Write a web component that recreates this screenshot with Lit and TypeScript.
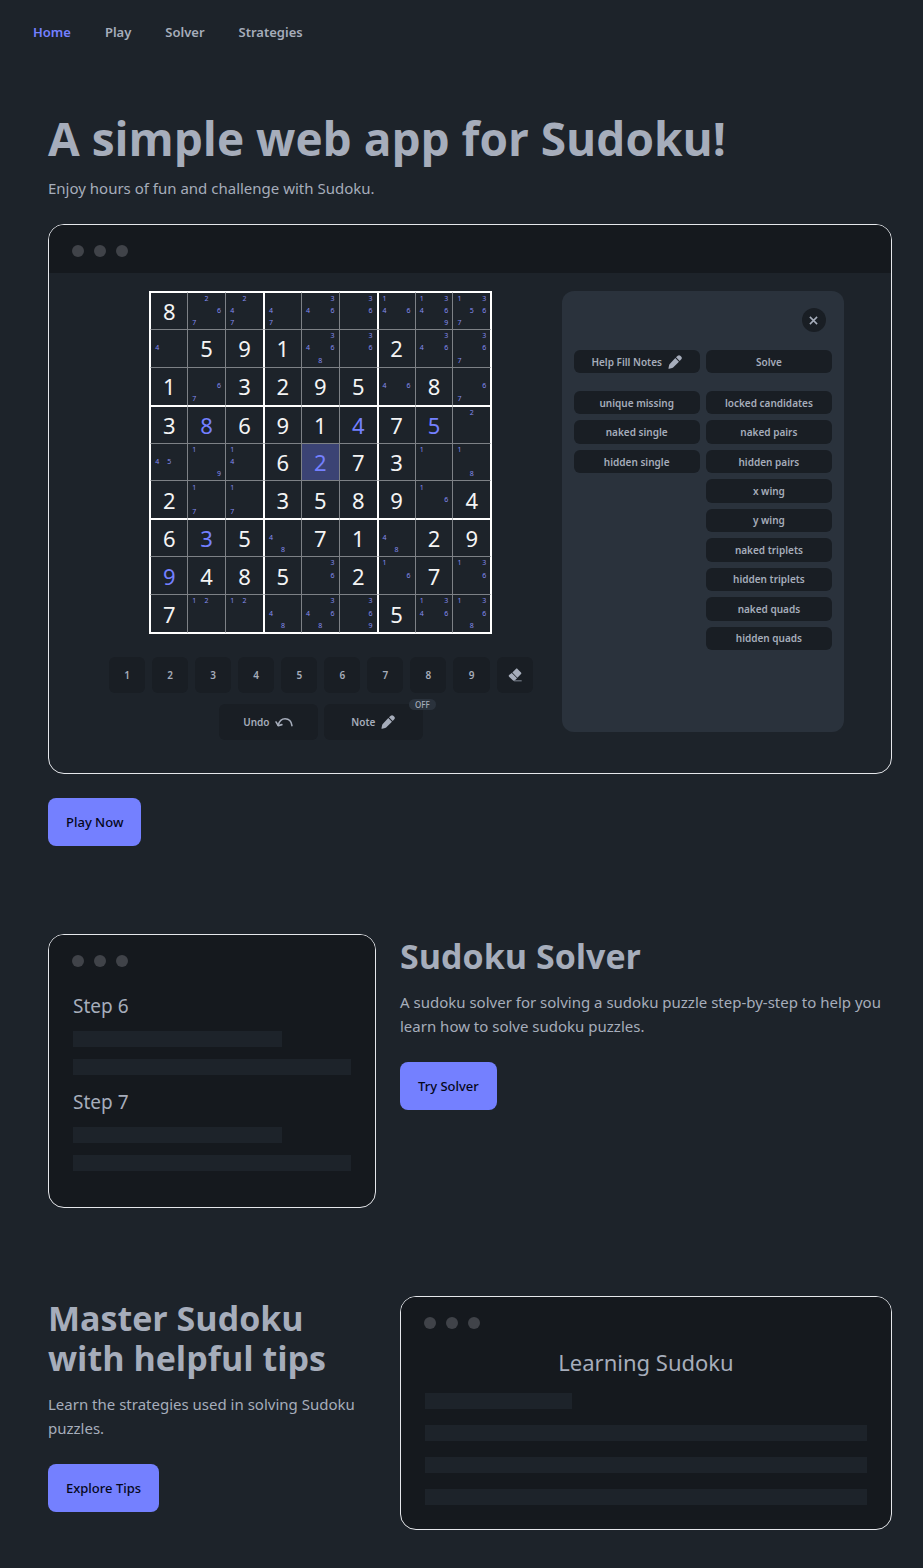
import { LitElement, html, css, svg, nothing } from "lit";
import { customElement, property } from "lit/decorators.js";
import { classMap } from "lit/directives/class-map.js";

const pencilIcon = html`<svg class="icon" viewBox="0 0 24 24" aria-hidden="true">
  ${svg`<path fill="currentColor" d="M12.500 5.200l6.300 6.300L8.800 21.300c-.5.5-1 .8-1.700.9l-5.300 1.300c-.6.1-1.200-.4-1-1l1.200-5.400c.2-.7.500-1.200 1-1.700zM13.700 4l3-2.800c1.200-1.200 3.200-1.200 4.400 0l1.700 1.700c1.200 1.200 1.200 3.200 0 4.400l-2.800 3z"/>`}
</svg>`;

const undoIcon = html`<svg class="icon undo" viewBox="0 0 34 20" aria-hidden="true">
  ${svg`<g fill="none" stroke="currentColor" stroke-width="3" stroke-linecap="round" stroke-linejoin="round">
    <path d="M32 16C31 8 26 3 19 3C12 3 8 8 6 15"/>
    <path d="M2 9L6 16L13 14"/>
  </g>`}
</svg>`;

const eraserIcon = html`<svg class="icon" viewBox="0 0 24 24" aria-hidden="true">
  ${svg`<g fill="currentColor">
    <path d="M13.500 1.500c.8-.8 2-.8 2.800 0l6 6c.8.8.8 2 0 2.800l-6.200 6.200L7.500 7.800z"/>
    <path d="M6.500 8.700l9 9-4 3.600c-.8.800-2 .800-2.800 0L1.800 14.800c-.8-.8-.8-2 0-2.800z"/>
    <path opacity=".5" d="M12 20.500h11.500v2.500H10z"/>
  </g>`}
</svg>`;

const closeIcon = html`<svg class="cross" viewBox="0 0 10 10" aria-hidden="true">
  ${svg`<path d="M1 1L9 9M9 1L1 9" fill="none" stroke="currentColor" stroke-width="1.700"/>`}
</svg>`;

/* "8" is a given digit, "*8" an entered one, "!2" the selected one, "n267" pencil notes. */
const PUZZLE: string[][] = [
  ["8", "n267", "n247", "n47", "n346", "n36", "n146", "n13469", "n13567"],
  ["n4", "5", "9", "1", "n3468", "n36", "2", "n346", "n367"],
  ["1", "n67", "3", "2", "9", "5", "n46", "8", "n67"],
  ["3", "*8", "6", "9", "1", "*4", "7", "*5", "n2"],
  ["n45", "n19", "n14", "6", "!2", "7", "3", "n1", "n18"],
  ["2", "n17", "n17", "3", "5", "8", "9", "n16", "4"],
  ["6", "*3", "5", "n48", "7", "1", "n48", "2", "9"],
  ["*9", "4", "8", "5", "n36", "2", "n16", "7", "n136"],
  ["7", "n12", "n12", "n48", "n3468", "n369", "5", "n1346", "n1368"],
];

const DIGITS = ["1", "2", "3", "4", "5", "6", "7", "8", "9"];
const BASIC = ["unique missing", "naked single", "hidden single"];
const ADVANCED = [
  "locked candidates",
  "naked pairs",
  "hidden pairs",
  "x wing",
  "y wing",
  "naked triplets",
  "hidden triplets",
  "naked quads",
  "hidden quads",
];

@customElement("mock-window")
class MockWindow extends LitElement {
  @property({ type: Boolean, reflect: true }) dark = false;

  static styles = css`
    :host {
      display: block;
      box-sizing: border-box;
      overflow: hidden;
      border: 1px solid #e5e7eb;
      border-radius: 16px;
    }
    :host([dark]) {
      background: #15191e;
    }
    .bar {
      display: flex;
      gap: 10px;
      box-sizing: border-box;
      height: 48px;
      padding: 20px 23px 0;
      background: #15191e;
    }
    .dot {
      width: 12px;
      height: 12px;
      border-radius: 50%;
      background: #404349;
    }
  `;

  render() {
    return html`<div class="bar">
        <span class="dot"></span><span class="dot"></span><span class="dot"></span>
      </div>
      <slot></slot>`;
  }
}

@customElement("sudoku-board")
class SudokuBoard extends LitElement {
  static styles = css`
    :host {
      display: grid;
      grid-template: repeat(9, minmax(0, 1fr)) / repeat(9, minmax(0, 1fr));
      box-sizing: border-box;
      width: 343px;
      aspect-ratio: 1;
      border: 1px solid #ffffff;
      color: #f4f4f4;
    }
    .cell {
      display: grid;
      place-items: center;
      border: 0 solid #ffffff;
      border-right: 1px solid #7d8186;
      border-bottom: 1px solid #7d8186;
      font-size: 22px;
      line-height: 24px;
    }
    .left {
      border-left: 1px solid #ffffff;
    }
    .right {
      border-right-color: #ffffff;
    }
    .top {
      border-top: 1px solid #ffffff;
    }
    .bottom {
      border-bottom-color: #ffffff;
    }
    .entered {
      color: #7480ff;
    }
    .selected {
      background: #3b4374;
    }
    .notes {
      grid-template: repeat(3, minmax(0, 1fr)) / repeat(3, minmax(0, 1fr));
      color: #858df0;
      font-size: 7px;
      line-height: 8px;
    }
  `;

  private cell(value: string, row: number, col: number) {
    const notes = value[0] === "n";
    const selected = value[0] === "!";
    const classes = classMap({
      cell: true,
      notes,
      selected,
      entered: selected || value[0] === "*",
      left: col % 3 === 0,
      right: col % 3 === 2,
      top: row % 3 === 0,
      bottom: row % 3 === 2,
    });
    return html`<div class=${classes}>
      ${notes
        ? DIGITS.map((d) => html`<span>${value.includes(d) ? d : nothing}</span>`)
        : value.slice(-1)}
    </div>`;
  }

  render() {
    return PUZZLE.map((line, row) => line.map((value, col) => this.cell(value, row, col)));
  }
}

@customElement("game-preview")
class GamePreview extends LitElement {
  static styles = css`
    :host {
      display: grid;
      grid-template-columns: minmax(0, 3fr) minmax(0, 2fr);
      gap: 29px;
      align-items: start;
      padding: 18px 47px 33px 60px;
    }
    button {
      display: flex;
      align-items: center;
      justify-content: center;
      gap: 6px;
      margin: 0;
      padding: 0;
      border: 0;
      border-radius: 6px;
      background: #191e24;
      color: #a6adbb;
      font-family: inherit;
      font-size: 10px;
      font-weight: 600;
      line-height: 14px;
    }
    .icon {
      width: 14px;
      height: 14px;
    }
    .undo {
      width: 18px;
      height: 11px;
    }
    .play {
      display: flex;
      flex-direction: column;
      align-items: center;
    }
    .keys {
      display: grid;
      grid-template-columns: repeat(10, minmax(0, 1fr));
      gap: 7px;
      align-self: stretch;
      margin-top: 23px;
    }
    .keys button,
    .actions button {
      height: 36px;
    }
    .actions {
      display: grid;
      grid-template-columns: 99px 99px;
      gap: 6px;
      margin-top: 11px;
    }
    .toggle {
      position: relative;
    }
    .badge {
      position: absolute;
      top: -5px;
      right: -13px;
      padding: 0 6px;
      border-radius: 6px;
      background: #2a323c;
      font-size: 8px;
      font-weight: 500;
      line-height: 11px;
    }
    .panel {
      display: flex;
      flex-direction: column;
      gap: 18px;
      box-sizing: border-box;
      min-height: 441px;
      padding: 17px 12px;
      border-radius: 12px;
      background: #2a323c;
    }
    .panel .close {
      align-self: flex-end;
      width: 24px;
      height: 24px;
      margin-right: 6px;
      border-radius: 50%;
    }
    .cross {
      width: 9px;
      height: 9px;
    }
    .pair {
      display: grid;
      grid-template-columns: repeat(2, minmax(0, 1fr));
      gap: 6px;
    }
    .pair > button {
      height: 23px;
    }
    .stack {
      display: grid;
      grid-template-rows: repeat(9, minmax(0, 1fr));
      gap: 6px;
      height: 259px;
    }
  `;

  render() {
    return html`
      <div class="play">
        <sudoku-board></sudoku-board>
        <div class="keys">
          ${DIGITS.map((d) => html`<button type="button">${d}</button>`)}
          <button type="button" aria-label="Erase">${eraserIcon}</button>
        </div>
        <div class="actions">
          <button type="button">Undo ${undoIcon}</button>
          <button type="button" class="toggle">Note ${pencilIcon}<span class="badge">OFF</span></button>
        </div>
      </div>
      <div class="panel">
        <button type="button" class="close" aria-label="Close">${closeIcon}</button>
        <div class="pair">
          <button type="button">Help Fill Notes ${pencilIcon}</button>
          <button type="button">Solve</button>
        </div>
        <div class="pair">
          <div class="stack">${BASIC.map((t) => html`<button type="button">${t}</button>`)}</div>
          <div class="stack">${ADVANCED.map((t) => html`<button type="button">${t}</button>`)}</div>
        </div>
      </div>
    `;
  }
}

@customElement("app-root")
class AppRoot extends LitElement {
  static styles = css`
    :host {
      display: block;
      box-sizing: border-box;
      min-height: 100vh;
      background: #1d232a;
      color: #a6adbb;
      font-family: "Segoe UI", "Noto Sans", "Open Sans", sans-serif;
      font-size: 15px;
      line-height: 24px;
    }
    nav {
      display: flex;
      align-items: center;
      gap: 34px;
      height: 64px;
      padding: 0 33px;
      font-size: 13px;
      font-weight: 600;
    }
    a {
      color: inherit;
      text-decoration: none;
    }
    .active {
      color: #7480ff;
    }
    main {
      display: flex;
      flex-direction: column;
      gap: 88px;
      padding: 48px 31px 38px 48px;
    }
    h1,
    h2,
    h3,
    p {
      margin: 0;
    }
    h1,
    h2 {
      padding-top: 2px;
      margin-bottom: 14px;
      font-family: "Segoe UI", "Open Sans", "Noto Sans", sans-serif;
      font-weight: 700;
    }
    h1 {
      font-size: 46px;
      line-height: 48px;
    }
    h2 {
      font-size: 34px;
      line-height: 40px;
    }
    h3 {
      padding-top: 2px;
      font-weight: 400;
    }
    .hero mock-window {
      margin: 24px 0;
    }
    .cta {
      display: inline-flex;
      align-items: center;
      height: 48px;
      padding: 0 18px;
      border-radius: 8px;
      background: #7480ff;
      color: #05071a;
      font-size: 13px;
      font-weight: 500;
    }
    .split {
      display: grid;
      grid-template-columns: minmax(0, 2fr) minmax(0, 3fr);
      gap: 24px;
      align-items: start;
    }
    .split .cta {
      margin-top: 24px;
    }
    .steps,
    .lesson {
      display: flex;
      flex-direction: column;
    }
    .steps {
      gap: 12px;
      padding: 8px 24px 36px;
    }
    .steps h3 {
      font-size: 19px;
      line-height: 26px;
    }
    .lesson {
      gap: 16px;
      padding: 0 24px 24px;
    }
    .lesson h3 {
      font-size: 22px;
      line-height: 30px;
      text-align: center;
    }
    .line {
      height: 16px;
      background: #1d232a;
    }
    .most {
      width: 75%;
    }
    .third {
      width: 33.3333%;
    }
  `;

  render() {
    return html`
      <nav>
        <a class="active" href="#home">Home</a>
        <a href="#play">Play</a>
        <a href="#solver">Solver</a>
        <a href="#strategies">Strategies</a>
      </nav>
      <main>
        <section class="hero">
          <h1>A simple web app for Sudoku!</h1>
          <p>Enjoy hours of fun and challenge with Sudoku.</p>
          <mock-window><game-preview></game-preview></mock-window>
          <a class="cta" href="#play">Play Now</a>
        </section>
        <section class="split">
          <mock-window dark>
            <div class="steps">
              ${["Step 6", "Step 7"].map(
                (step) => html`<h3>${step}</h3>
                  <div class="line most"></div>
                  <div class="line"></div>`
              )}
            </div>
          </mock-window>
          <div>
            <h2>Sudoku Solver</h2>
            <p>
              A sudoku solver for solving a sudoku puzzle step-by-step to help you learn how to solve
              sudoku puzzles.
            </p>
            <a class="cta" href="#solver">Try Solver</a>
          </div>
        </section>
        <section class="split">
          <div>
            <h2>Master Sudoku with helpful tips</h2>
            <p>Learn the strategies used in solving Sudoku puzzles.</p>
            <a class="cta" href="#strategies">Explore Tips</a>
          </div>
          <mock-window dark>
            <div class="lesson">
              <h3>Learning Sudoku</h3>
              <div class="line third"></div>
              <div class="line"></div>
              <div class="line"></div>
              <div class="line"></div>
            </div>
          </mock-window>
        </section>
      </main>
    `;
  }
}
